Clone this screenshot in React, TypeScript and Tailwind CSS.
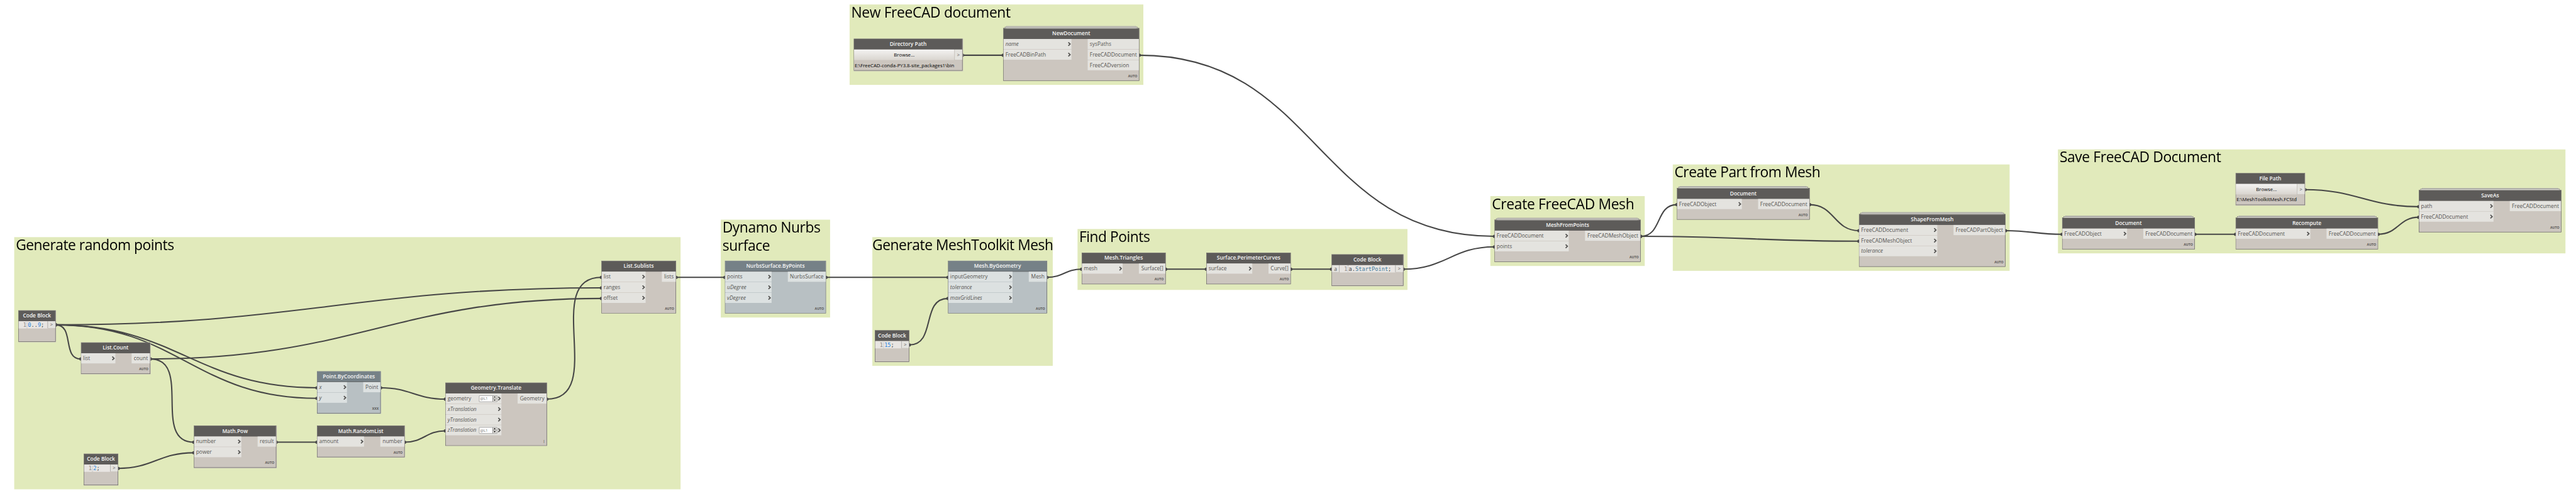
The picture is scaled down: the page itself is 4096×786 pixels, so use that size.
import type { ReactNode } from "react";
import { clsx } from "clsx";

type Port = { label: string; optional?: boolean; level?: string };

function Group({ at, title, pad = "pl-1", tracking }: { at: string; title: string; pad?: string; tracking: string }) {
  return (
    <section className={clsx("absolute bg-[#e1eabb]", at)}>
      <h2 className={clsx("whitespace-pre text-[35.3px] leading-[44px] -mt-[4px] text-black", pad, tracking)}>{title}</h2>
    </section>
  );
}

function Chevron() {
  return (
    <svg className="mr-px h-[11px] w-[8px] shrink-0" viewBox="0 0 8 11" fill="none">
      <path d="M1.3 1.2 L5.8 5.5 L1.3 9.8" stroke="#555452" strokeWidth="2.7" />
    </svg>
  );
}

function LevelBox({ text }: { text: string }) {
  return (
    <span className="mr-px flex h-[16px] w-[45px] shrink-0 rounded-[1px] border border-[#858585] bg-white">
      <span className="flex-1 pl-[1.5px] text-[9.5px] leading-[14px] text-[#777] not-italic">{text}</span>
      <span className="flex w-[11.5px] flex-col gap-px border-l border-[#777] bg-[#777]">
        <span className="flex flex-1 items-center justify-center bg-[#dcdad6]">
          <svg className="h-[3px] w-[5px]" viewBox="0 0 5 3"><path d="M0 3 L2.5 0 L5 3Z" fill="#000" /></svg>
        </span>
        <span className="flex flex-1 items-center justify-center bg-[#dcdad6]">
          <svg className="h-[3px] w-[5px]" viewBox="0 0 5 3"><path d="M0 0 L2.5 3 L5 0Z" fill="#000" /></svg>
        </span>
      </span>
    </span>
  );
}

function Stack() {
  return (
    <>
      <div className="absolute -top-[6px] right-[7px] left-[7px] h-[6px] border border-[#a9a9a4] bg-[#d9dacb]" />
      <div className="absolute -top-[4px] right-[3px] left-[3px] h-[4px] border border-[#7e7d7a] bg-[#dbdad3]" />
    </>
  );
}

function Header({ title, blue }: { title: string; blue?: boolean }) {
  return (
    <header
      className={clsx(
        "h-[26px] text-center text-[13px] leading-[25px] font-semibold whitespace-nowrap text-[#f7f7f6]",
        blue ? "border-b border-[#5c5b59] bg-[#768187]" : "bg-[#5d5b59]",
      )}
    >
      {title}
    </header>
  );
}

function Node({
  at, title, inputs, outputs, blue, stack, lacing = "AUTO",
}: { at: string; title: string; inputs: Port[]; outputs: string[]; blue?: boolean; stack?: boolean; lacing?: string }) {
  const port = blue ? "bg-[#dce1e1]" : "bg-[#e4e3df]";
  return (
    <article
      className={clsx("absolute flex flex-col border border-[#5d5b59] text-[13px] text-[#565452]", blue ? "bg-[#b8c0c3]" : "bg-[#ccc6bf]", at)}
    >
      {stack && <Stack />}
      <Header title={title} blue={blue} />
      <div className="flex items-start gap-[40px]">
        <ul className="flex flex-1 flex-col gap-px">
          {inputs.map((p) => (
            <li key={p.label} className={clsx("flex h-[25px] items-center pl-[4.5px] leading-[25px]", port, p.optional && "italic")}>
              <span className="flex-1 whitespace-nowrap">{p.label}</span>
              {p.level && <LevelBox text={p.level} />}
              <Chevron />
            </li>
          ))}
        </ul>
        <ul className="flex flex-col gap-px">
          {outputs.map((o) => (
            <li key={o} className={clsx("h-[25px] pr-[5px] pl-[5.5px] leading-[25px] whitespace-nowrap", port)}>{o}</li>
          ))}
        </ul>
      </div>
      <footer className="mt-auto pr-[4px] pb-[7px] text-right text-[8px] leading-[8px] font-bold">{lacing}</footer>
    </article>
  );
}

function CodeBlock({ at, input, children }: { at: string; input?: string; children: ReactNode }) {
  return (
    <article className={clsx("absolute h-[78px] border border-[#5d5b59] bg-[#ccc6bf] text-[13px] text-[#565452]", at)}>
      <Header title="Code Block" />
      <div className="flex h-[18px] items-start">
        {input && <span className="h-[17px] w-[18px] bg-[#e4e3df] text-center leading-[18px]">{input}</span>}
        <div className={clsx("flex h-[18px] flex-1 bg-[#e8e5e2] font-['DejaVu_Sans_Mono',monospace] text-[13.4px] leading-[19px]", input && "border-l border-[#9c9a97]")}>
          <span className="w-[21px] border-r border-dotted border-[#9a9a9a] pr-[1px] text-right text-[#8d8b89]">1</span>
          <span className="pl-[1.5px] whitespace-pre text-[#3c3c3c]">{children}</span>
        </div>
        <span className="h-[17px] w-[19px] border-l border-[#9c9a97] bg-[#e4e3df] text-center text-[12px] leading-[17px]">&gt;</span>
      </div>
    </article>
  );
}

function PathNode({ at, title, path }: { at: string; title: string; path: string }) {
  return (
    <article className={clsx("absolute h-[79px] border border-[#5d5b59] bg-[#ccc6bf] text-[12px] text-black", at)}>
      <Header title={title} />
      <div className="flex items-start">
        <button className="h-[26px] flex-1 border-r border-[#bdb8b1] bg-linear-to-b from-[#f4f3f2] to-[#d9d5cf] text-[12px] leading-[23px]">Browse...</button>
        <span className="h-[25px] w-[18px] bg-[#e4e3df] text-center text-[12px] leading-[26px] text-[#565452]">&gt;</span>
      </div>
      <p className="pl-[1.5px] leading-[26px] whitespace-nowrap">{path}</p>
    </article>
  );
}

const wires: [number, number, number, number][] = [
  [137, 800, 199, 884],
  [137, 800, 780, 955],
  [137, 800, 780, 981],
  [137, 800, 1480, 709],
  [370, 884, 1480, 735],
  [370, 884, 477, 1089],
  [291, 1153.5, 477, 1115],
  [680, 1089, 780, 1089],
  [937, 955, 1096, 983],
  [996, 1089, 1096, 1061],
  [1346, 983, 1480, 683],
  [1664, 683, 1784, 683],
  [2033, 683, 2333, 683],
  [2238, 849.5, 2333, 735],
  [2577, 683, 2662, 663],
  [2869, 663, 2969, 663],
  [3177, 663, 3277, 663],
  [3454, 663, 3678, 608],
  [2369, 136, 2469, 136],
  [2804, 136, 3678, 582],
  [4038, 582, 4127, 504],
  [4038, 582, 4575, 594],
  [4454, 504, 4575, 568],
  [4936, 568, 5075, 577],
  [5402, 577, 5502, 577],
  [5673, 467, 5953, 509],
  [5853, 577, 5953, 535],
];

function Wires() {
  return (
    <svg className="absolute top-0 left-0 h-[1216px] w-[6340px]" viewBox="0 0 6340 1216">
      {wires.map(([x0, y0, x1, y1], i) => {
        const o = 0.45 * Math.hypot(x1 - x0, y1 - y0);
        return (
          <g key={i}>
            <path d={`M${x0} ${y0} C${x0 + o} ${y0} ${x1 - o} ${y1} ${x1} ${y1}`} fill="none" stroke="#464646" strokeWidth="3.2" />
            <circle cx={x0} cy={y0} r="4" fill="#464646" />
            <circle cx={x1} cy={y1} r="4" fill="#464646" />
          </g>
        );
      })}
    </svg>
  );
}

const opt = (label: string, level?: string): Port => ({ label, optional: true, level });
const req = (label: string, level?: string): Port => ({ label, level });

function Num({ children }: { children: string }) {
  return <span className="text-[#2a86e0]">{children}</span>;
}

export default function App() {
  return (
    <div className="h-[786px] w-[4096px] overflow-hidden bg-white font-['Open_Sans',sans-serif]">
      <main className="relative h-[1216px] w-[6340px] origin-top-left scale-[0.64606]">
        <Group at="left-[35px] top-[584px] w-[1640px] h-[621px]" title="Generate random points" tracking="tracking-[-0.76px]" />
        <Group at="left-[1774px] top-[541px] w-[269px] h-[241px]" title={"Dynamo Nurbs\nsurface"} tracking="tracking-[-0.63px]" />
        <Group at="left-[2147px] top-[584px] w-[444px] h-[317px]" title="Generate MeshToolkit Mesh" pad="pl-0" tracking="tracking-[-0.71px]" />
        <Group at="left-[2091px] top-[11px] w-[723px] h-[198px]" title="New FreeCAD document" tracking="tracking-[-0.53px]" />
        <Group at="left-[2652px] top-[564px] w-[812px] h-[150px]" title="Find Points" tracking="tracking-[-0.71px]" />
        <Group at="left-[3668px] top-[483px] w-[380px] h-[172px]" title="Create FreeCAD Mesh" tracking="tracking-[-0.5px]" />
        <Group at="left-[4117px] top-[405px] w-[829px] h-[262px]" title="Create Part from Mesh" tracking="tracking-[-0.73px]" />
        <Group at="left-[5065px] top-[368px] w-[1249px] h-[256px]" title="Save FreeCAD Document" tracking="tracking-[-0.58px]" />

        <Wires />

        <CodeBlock at="left-[45px] top-[764px] w-[92px]"><Num>0</Num>..<Num>9</Num>;</CodeBlock>
        <Node at="left-[199px] top-[843px] w-[171px] h-[78px]" title="List.Count" inputs={[req("list")]} outputs={["count"]} />
        <Node at="left-[477px] top-[1048px] w-[203px] h-[104px]" title="Math.Pow" inputs={[req("number"), req("power")]} outputs={["result"]} />
        <CodeBlock at="left-[206px] top-[1117px] w-[85px]"><Num>2</Num>;</CodeBlock>
        <Node at="left-[780px] top-[914px] w-[157px] h-[104px]" title="Point.ByCoordinates" blue lacing="XXX" inputs={[opt("x"), opt("y")]} outputs={["Point"]} />
        <Node at="left-[780px] top-[1048px] w-[216px] h-[78px]" title="Math.RandomList" inputs={[req("amount")]} outputs={["number"]} />
        <Node
          at="left-[1096px] top-[942px] w-[250px] h-[156px]" title="Geometry.Translate" lacing="|"
          inputs={[req("geometry", "@L1"), opt("xTranslation"), opt("yTranslation"), opt("zTranslation", "@L1")]} outputs={["Geometry"]}
        />
        <Node at="left-[1480px] top-[642px] w-[184px] h-[130px]" title="List.Sublists" inputs={[req("list"), req("ranges"), req("offset")]} outputs={["lists"]} />

        <Node at="left-[1784px] top-[642px] w-[249px] h-[130px]" title="NurbsSurface.ByPoints" blue inputs={[req("points"), opt("uDegree"), opt("vDegree")]} outputs={["NurbsSurface"]} />
        <Node at="left-[2333px] top-[642px] w-[244px] h-[130px]" title="Mesh.ByGeometry" blue inputs={[req("inputGeometry"), opt("tolerance"), opt("maxGridLines")]} outputs={["Mesh"]} />
        <CodeBlock at="left-[2153px] top-[813px] w-[85px]"><Num>15</Num>;</CodeBlock>

        <PathNode at="left-[2101px] top-[95px] w-[268px]" title="Directory Path" path="E:\FreeCAD-conda-PY3.8-site_packages1\bin" />
        <Node at="left-[2469px] top-[69px] w-[335px] h-[130px]" title="NewDocument" stack inputs={[opt("name"), req("FreeCADBinPath")]} outputs={["sysPaths", "FreeCADDocument", "FreeCADversion"]} />

        <Node at="left-[2662px] top-[622px] w-[207px] h-[78px]" title="Mesh.Triangles" inputs={[req("mesh")]} outputs={["Surface[]"]} />
        <Node at="left-[2969px] top-[622px] w-[208px] h-[78px]" title="Surface.PerimeterCurves" inputs={[req("surface")]} outputs={["Curve[]"]} />
        <CodeBlock at="left-[3277px] top-[626px] w-[177px]" input="a">a.<span className="text-[#3f7a9c]">StartPoint</span>;</CodeBlock>

        <Node at="left-[3678px] top-[541px] w-[360px] h-[104px]" title="MeshFromPoints" stack inputs={[req("FreeCADDocument"), req("points")]} outputs={["FreeCADMeshObject"]} />

        <Node at="left-[4127px] top-[463px] w-[327px] h-[78px]" title="Document" stack inputs={[req("FreeCADObject")]} outputs={["FreeCADDocument"]} />
        <Node at="left-[4575px] top-[527px] w-[361px] h-[130px]" title="ShapeFromMesh" stack inputs={[req("FreeCADDocument"), req("FreeCADMeshObject"), opt("tolerance")]} outputs={["FreeCADPartObject"]} />

        <Node at="left-[5075px] top-[536px] w-[327px] h-[78px]" title="Document" stack inputs={[req("FreeCADObject")]} outputs={["FreeCADDocument"]} />
        <PathNode at="left-[5502px] top-[426px] w-[171px]" title="File Path" path="E:\MeshToolkitMesh.FCStd" />
        <Node at="left-[5502px] top-[536px] w-[351px] h-[78px]" title="Recompute" stack inputs={[req("FreeCADDocument")]} outputs={["FreeCADDocument"]} />
        <Node at="left-[5953px] top-[468px] w-[351px] h-[104px]" title="SaveAs" stack inputs={[req("path"), req("FreeCADDocument")]} outputs={["FreeCADDocument"]} />
      </main>
    </div>
  );
}
